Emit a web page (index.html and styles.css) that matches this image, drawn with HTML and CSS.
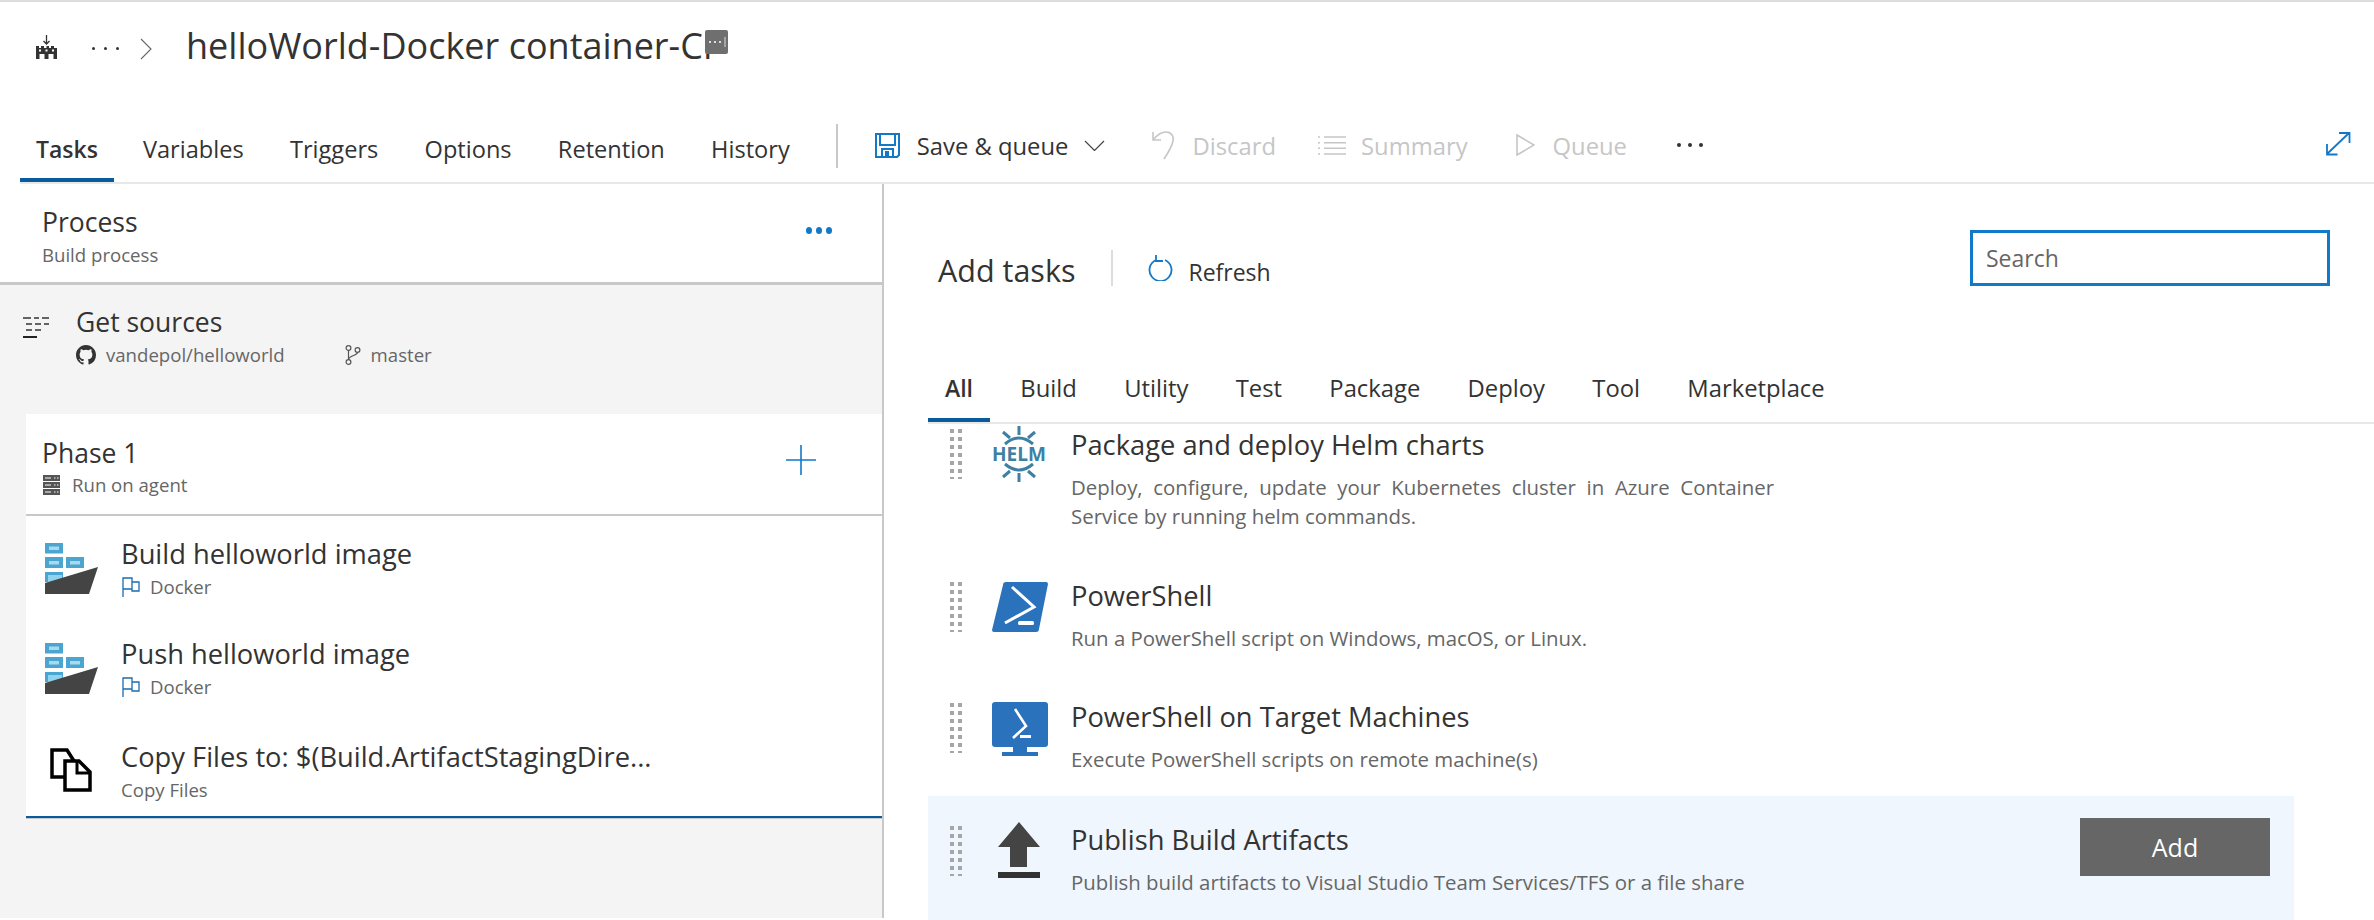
FILE: index.html
```html
<!DOCTYPE html>
<html lang="en">
  <head>
    <meta charset="UTF-8" />
    <title>helloWorld-Docker container-CI</title>
    <link rel="stylesheet" href="styles.css">
  </head>
  <body>
    <header id="main-header">
      <div class="title-row">
        <svg class="factory-icon" viewBox="0 0 21 24" width="21" height="24">
          <path d="M10.500 0v9M7.500 6l3 3 3-3" fill="none" stroke="#333" stroke-width="1.300"/>
          <path d="M0 11h3v2h2v-2h3v2h2.500v-2h2.500v2h2v-2h3v2h3v11H0z" fill="#333"/>
          <rect x="3" y="14.500" width="2" height="2" fill="#fff"/>
          <rect x="9.500" y="14.500" width="2" height="2" fill="#fff"/>
          <rect x="16" y="14.500" width="2" height="2" fill="#fff"/>
          <rect x="3.500" y="19" width="5" height="5" fill="#fff"/>
          <rect x="12.500" y="19" width="5" height="5" fill="#fff"/>
        </svg>
        <span class="crumb-dots"><i></i><i></i><i></i></span>
        <svg class="crumb-chevron" viewBox="0 0 12 22" width="12" height="22">
          <path d="M1 1l10 10L1 21" fill="none" stroke="#666" stroke-width="1.100"/>
        </svg>
        <h1 class="title">helloWorld-Docker container-CI</h1>
        <svg class="title-badge" viewBox="0 0 23 24" width="23" height="24">
          <rect width="23" height="24" rx="2" fill="#6f6f6f"/>
          <path d="M4 12h2M9 12h2M14 12h2" stroke="#ddd" stroke-width="2"/>
          <path d="M20 7v10" stroke="#ddd" stroke-width="1"/>
        </svg>
      </div>

      <div class="toolbar">
        <nav class="main-tabs">
          <a class="tab active">Tasks</a>
          <a class="tab">Variables</a>
          <a class="tab">Triggers</a>
          <a class="tab">Options</a>
          <a class="tab">Retention</a>
          <a class="tab">History</a>
        </nav>
        <span class="toolbar-sep"></span>
        <div class="actions">
          <button class="action save">
            <svg viewBox="0 0 25 25" width="25" height="25">
              <path d="M1 1h23v21l-2 2H1z" fill="none" stroke="#1278c8" stroke-width="2"/>
              <path d="M5 1v11h15V1M7 24v-8h11v8" fill="none" stroke="#1278c8" stroke-width="2"/>
              <rect x="10" y="18" width="4" height="6" fill="#1278c8"/>
            </svg>
            <span>Save &amp; queue</span>
            <svg class="save-chevron" viewBox="0 0 21 11" width="21" height="11">
              <path d="M1 1l9.500 9.500L20 1" fill="none" stroke="#444" stroke-width="1.200"/>
            </svg>
          </button>
          <button class="action discard" disabled>
            <svg viewBox="0 0 23 30" width="23" height="30">
              <path d="M1 2v8h8M1 10c4-5 8-8 13-8 6 0 8 5 7 9-1 5-5 12-9 18" fill="none" stroke="#c6c6c6" stroke-width="1.600"/>
            </svg>
            <span>Discard</span>
          </button>
          <button class="action summary" disabled>
            <svg viewBox="0 0 28 19" width="28" height="19">
              <path d="M6 1h22M6 6.700h22M6 12.300h22M6 18h22" stroke="#c6c6c6" stroke-width="1.600"/>
              <path d="M0 1h2M0 6.700h2M0 12.300h2M0 18h2" stroke="#c6c6c6" stroke-width="1.600"/>
            </svg>
            <span>Summary</span>
          </button>
          <button class="action queue" disabled>
            <svg viewBox="0 0 19 22" width="19" height="22">
              <path d="M1 1l17 10L1 21z" fill="none" stroke="#c6c6c6" stroke-width="1.600"/>
            </svg>
            <span>Queue</span>
          </button>
          <span class="more-dots"><i></i><i></i><i></i></span>
        </div>
        <svg class="expand-icon" viewBox="0 0 26 25" width="26" height="25">
          <path d="M2 23L24 2M14 2h10.500v10M2 13v10.500h10.500" fill="none" stroke="#1278c8" stroke-width="1.800"/>
        </svg>
      </div>
    </header>

    <main class="editor">
      <aside class="left-pane">
        <div class="process">
          <div>
            <p class="head">Process</p>
            <p class="sub">Build process</p>
          </div>
          <span class="process-dots"><i></i><i></i><i></i></span>
        </div>

        <div class="sources">
          <svg class="sources-icon" viewBox="0 0 26 21" width="26" height="21">
            <path d="M0 1h8M11 1h5M19 1h7M3 7h6M12 7h6M21 7h5M3 13h6M12 13h6" stroke="#333" stroke-width="1.500"/>
            <path d="M0 20h14" stroke="#222" stroke-width="2"/>
          </svg>
          <div>
            <p class="head">Get sources</p>
            <div class="sources-meta">
              <svg viewBox="0 0 16 16" width="20" height="20">
                <path fill="#333" d="M8 0C3.580 0 0 3.580 0 8c0 3.540 2.290 6.530 5.470 7.590.4.070.55-.17.55-.38v-1.340c-2.230.48-2.700-1.070-2.700-1.070-.36-.92-.89-1.170-.89-1.170-.73-.5.050-.49.050-.49.800.06 1.230.83 1.230.83.710 1.220 1.870.87 2.320.66.070-.52.280-.87.510-1.070-1.780-.2-3.640-.89-3.640-3.950 0-.87.310-1.590.820-2.150-.08-.2-.36-1.020.08-2.120 0 0 .67-.21 2.200.82a7.600 7.600 0 014 0c1.530-1.040 2.200-.82 2.200-.82.440 1.100.16 1.920.08 2.120.51.560.82 1.270.82 2.150 0 3.070-1.870 3.750-3.650 3.950.29.250.54.730.54 1.480v2.200c0 .21.150.46.550.38A8.010 8.010 0 0016 8c0-4.420-3.580-8-8-8z"/>
              </svg>
              <span class="repo">vandepol/helloworld</span>
              <svg class="branch" viewBox="0 0 16 20" width="16" height="20">
                <g fill="none" stroke="#555" stroke-width="1.200">
                  <circle cx="3.500" cy="3" r="2.400"/>
                  <circle cx="3.500" cy="17" r="2.400"/>
                  <circle cx="12.500" cy="5" r="2.400"/>
                  <path d="M3.500 5.500v9M12.500 7.500c0 3-9 3-9 7"/>
                </g>
              </svg>
              <span>master</span>
            </div>
          </div>
        </div>

        <section class="phase">
          <div class="phase-head">
            <div>
              <p class="head">Phase 1</p>
              <div class="phase-agent">
                <svg viewBox="0 0 17 20" width="17" height="20">
                  <path d="M0 0h17v6H0zM0 7h17v6H0zM0 14h17v6H0z" fill="#555"/>
                  <path d="M2 3h6M11 3h1.500M14 3h1.500M2 10h6M11 10h1.500M14 10h1.500M2 17h6M11 17h1.500M14 17h1.500" stroke="#fff" stroke-width="1.200"/>
                </svg>
                <span class="sub">Run on agent</span>
              </div>
            </div>
            <svg class="plus" viewBox="0 0 30 30" width="30" height="30">
              <path d="M15 0v30M0 15h30" stroke="#1278c8" stroke-width="1.600"/>
            </svg>
          </div>

          <div class="task">
            <svg class="docker" viewBox="0 0 56 56" width="56" height="56">
              <rect x="3" y="4" width="18" height="10.500" fill="#4aa5d0"/>
              <rect x="7" y="7.500" width="10" height="3.500" fill="#a9d9ec"/>
              <rect x="3" y="18" width="18" height="11" fill="#4aa5d0"/>
              <rect x="7" y="22" width="10" height="3.500" fill="#a9d9ec"/>
              <rect x="24" y="18" width="18" height="11" fill="#4aa5d0"/>
              <rect x="28" y="22" width="10" height="3.500" fill="#a9d9ec"/>
              <rect x="3" y="33" width="18" height="10" fill="#4aa5d0"/>
              <rect x="6" y="36" width="14" height="7" fill="#8fd4ee"/>
              <path d="M3 44L56 28 47 55H3z" fill="#444"/>
            </svg>
            <div>
              <p class="task-name">Build helloworld image</p>
              <div class="task-sub">
                <svg viewBox="0 0 18 20" width="18" height="20">
                  <path d="M1 20V1h9v11H1M10 5h7v9h-7V5" fill="none" stroke="#1a6cb0" stroke-width="1.300"/>
                </svg>
                <span class="sub">Docker</span>
              </div>
            </div>
          </div>

          <div class="task">
            <svg class="docker" viewBox="0 0 56 56" width="56" height="56">
              <rect x="3" y="4" width="18" height="10.500" fill="#4aa5d0"/>
              <rect x="7" y="7.500" width="10" height="3.500" fill="#a9d9ec"/>
              <rect x="3" y="18" width="18" height="11" fill="#4aa5d0"/>
              <rect x="7" y="22" width="10" height="3.500" fill="#a9d9ec"/>
              <rect x="24" y="18" width="18" height="11" fill="#4aa5d0"/>
              <rect x="28" y="22" width="10" height="3.500" fill="#a9d9ec"/>
              <rect x="3" y="33" width="18" height="10" fill="#4aa5d0"/>
              <rect x="6" y="36" width="14" height="7" fill="#8fd4ee"/>
              <path d="M3 44L56 28 47 55H3z" fill="#444"/>
            </svg>
            <div>
              <p class="task-name">Push helloworld image</p>
              <div class="task-sub">
                <svg viewBox="0 0 18 20" width="18" height="20">
                  <path d="M1 20V1h9v11H1M10 5h7v9h-7V5" fill="none" stroke="#1a6cb0" stroke-width="1.300"/>
                </svg>
                <span class="sub">Docker</span>
              </div>
            </div>
          </div>

          <div class="task task-copy">
            <svg class="copy-icon" viewBox="0 0 42 44" width="42" height="44">
              <path d="M20 29H2V2h15l7 11" fill="none" stroke="#000" stroke-width="3.500"/>
              <path d="M15 13h14l11 11v18H15z" fill="#fff" stroke="#000" stroke-width="3.500"/>
              <path d="M27 13v12h13" fill="none" stroke="#000" stroke-width="3"/>
            </svg>
            <div>
              <p class="task-name">Copy Files to: $(Build.ArtifactStagingDire...</p>
              <p class="sub task-plain">Copy Files</p>
            </div>
          </div>
        </section>
      </aside>

      <section class="right-pane">
        <div class="add-head">
          <h2 class="add-title">Add tasks</h2>
          <span class="add-sep"></span>
          <svg class="refresh-icon" viewBox="0 0 25 26" width="25" height="26">
            <path d="M8 5a11 11 0 1 0 9 0M8 0v6h7" fill="none" stroke="#1278c8" stroke-width="1.800"/>
          </svg>
          <span class="refresh">Refresh</span>
          <div class="search">Search</div>
        </div>

        <nav class="filter-tabs">
          <a class="filter active">All</a>
          <a class="filter">Build</a>
          <a class="filter">Utility</a>
          <a class="filter">Test</a>
          <a class="filter">Package</a>
          <a class="filter">Deploy</a>
          <a class="filter">Tool</a>
          <a class="filter">Marketplace</a>
        </nav>

        <div class="catalog">
          <ul class="catalog-list">
            <li class="item item-tall">
              <span class="grip"></span>
              <svg class="item-icon icon-helm" viewBox="0 0 56 56" width="56" height="56">
                <g fill="none" stroke="#3d80a3" stroke-width="3">
                  <path d="M13 18Q27 6 41 18M13 38Q27 50 41 38"/>
                  <path d="M27 0v9M11 6l7 6M43 6l-7 6M27 56v-9M11 51l7-6M43 51l-7-6"/>
                </g>
                <text class="helm-text" x="27" y="35" text-anchor="middle" textLength="54" lengthAdjust="spacingAndGlyphs">HELM</text>
              </svg>
              <div class="item-body">
                <p class="item-name">Package and deploy Helm charts</p>
                <p class="item-desc">Deploy, configure, update your Kubernetes cluster in Azure Container Service by running helm commands.</p>
              </div>
            </li>
            <li class="item">
              <span class="grip"></span>
              <svg class="item-icon" viewBox="0 0 56 50" width="56" height="50">
                <path d="M11 3a3 3 0 0 1 3-3h40a2 2 0 0 1 2 2l-9 45a3 3 0 0 1-3 3H2a2 2 0 0 1-2-2z" fill="#2b72bd"/>
                <path d="M20 5l22 20-29 16" fill="none" stroke="#fff" stroke-width="3"/>
                <rect x="26" y="39" width="16" height="4" rx="1.500" fill="#fff"/>
              </svg>
              <div class="item-body">
                <p class="item-name">PowerShell</p>
                <p class="item-desc">Run a PowerShell script on Windows, macOS, or Linux.</p>
              </div>
            </li>
            <li class="item">
              <span class="grip"></span>
              <svg class="item-icon icon-monitor" viewBox="0 0 56 54" width="56" height="54">
                <path d="M3 0h50a3 3 0 0 1 3 3v39a3 3 0 0 1-3 3H3a3 3 0 0 1-3-3V3a3 3 0 0 1 3-3z" fill="#2b72bd"/>
                <path d="M21 45h14v5H21zM10 50h36v4H10z" fill="#2b72bd"/>
                <path d="M23 7l11 17-13 12" fill="none" stroke="#fff" stroke-width="2.600"/>
                <rect x="28" y="33" width="11" height="3" fill="#fff"/>
              </svg>
              <div class="item-body">
                <p class="item-name">PowerShell on Target Machines</p>
                <p class="item-desc">Execute PowerShell scripts on remote machine(s)</p>
              </div>
            </li>
            <li class="item selected">
              <span class="grip"></span>
              <svg class="item-icon icon-publish" viewBox="0 0 42 56" width="42" height="56">
                <path d="M21 0l21 25H29v20H12V25H0z" fill="#444"/>
                <rect y="50" width="42" height="6" fill="#333"/>
              </svg>
              <div class="item-body">
                <p class="item-name">Publish Build Artifacts</p>
                <p class="item-desc">Publish build artifacts to Visual Studio Team Services/TFS or a file share</p>
              </div>
              <button class="add-button">Add</button>
            </li>
          </ul>
        </div>
      </section>
    </main>
  </body>
</html>
```

FILE: styles.css
```css
* {
  margin: 0;
  padding: 0;
  box-sizing: border-box;
}

html,
body {
  height: 920px;
  overflow: hidden;
}

body {
  font-family: "Open Sans", sans-serif;
  font-size: 23px;
  color: #333;
  background-color: white;
}

svg {
  display: block;
  flex: none;
}

/* header */
#main-header {
  border-top: 2px solid #ddd;
  height: 184px;
}

.title-row {
  height: 118px;
  display: flex;
  align-items: flex-start;
  padding: 33px 0 0 36px;
  position: relative;
}

.crumb-dots {
  margin: 12px 0 0 35px;
  width: 27px;
  display: flex;
  justify-content: space-between;
}

.crumb-dots i {
  width: 3px;
  height: 3px;
  border-radius: 50%;
  background-color: #333;
}

.crumb-chevron {
  margin: 3px 0 0 21px;
}

.title {
  margin: -12px 0 0 34px;
  font-size: 36px;
  font-weight: 400;
  line-height: 46px;
}

.title-badge {
  position: absolute;
  left: 705px;
  top: 28px;
}

.toolbar {
  height: 64px;
  margin-left: 20px;
  border-bottom: 2px solid #e8e8e8;
  display: flex;
  align-items: flex-start;
}

.main-tabs {
  display: flex;
  height: 62px;
  align-items: flex-end;
}

.tab {
  padding: 0 16px;
  margin-right: 14.25px;
  height: 44px;
  font-size: 23.6px;
  line-height: 22px;
  border-bottom: 4px solid transparent;
}

.tab:last-child {
  margin-right: 0;
}

.tab.active {
  font-size: 23px;
  font-weight: 600;
  margin-right: 13px;
  border-bottom-color: #0a5a9e;
}

.toolbar-sep {
  width: 2px;
  height: 44px;
  margin: 4px 37px 0 30px;
  background-color: #c8c8c8;
}

.actions {
  display: flex;
  align-items: center;
  height: 50px;
  font-size: 23.8px;
}

.action {
  display: flex;
  align-items: center;
  gap: 17px;
  border: 0;
  background: none;
  font: inherit;
  color: #333;
}

.action span {
  position: relative;
  top: 1px;
}

.action:disabled {
  color: #c6c6c6;
}

.save-chevron {
  margin-left: -1px;
}

.discard {
  margin-left: 47px;
}

.summary {
  margin-left: 42px;
  gap: 15px;
}

.queue {
  margin-left: 48px;
  gap: 18px;
}

.more-dots {
  margin-left: 50px;
  display: flex;
  gap: 7px;
}

.more-dots i {
  width: 4px;
  height: 4px;
  border-radius: 50%;
  background-color: #333;
}

.expand-icon {
  margin: 11px 23px 0 auto;
}

/* left pane */
.editor {
  display: flex;
  height: 734px;
}

.left-pane {
  width: 884px;
  flex: none;
  border-right: 2px solid #c8c8c8;
  background-color: #f4f4f4;
}

.head {
  font-size: 26.5px;
  line-height: 34px;
}

.sub {
  font-size: 18.6px;
  line-height: 26px;
  color: #666;
}

.process {
  height: 101px;
  padding: 21px 0 0 42px;
  background-color: white;
  border-bottom: 3px solid #c8c8c8;
  display: flex;
  justify-content: space-between;
}

.process .sub {
  margin-top: 3px;
}

.process-dots {
  display: flex;
  gap: 4px;
  height: 7px;
  margin: 22px 50px 0 0;
}

.process-dots i {
  width: 6px;
  height: 7px;
  border-radius: 50%;
  background-color: #1278c8;
}

.sources {
  height: 129px;
  display: flex;
  padding: 20px 0 0 23px;
  gap: 27px;
}

.sources-icon {
  margin-top: 12px;
}

.sources-meta {
  display: flex;
  align-items: center;
  gap: 10px;
  font-size: 18.6px;
  color: #666;
  margin-top: 3px;
}

.branch {
  margin-left: 50px;
}

.phase {
  margin-left: 26px;
  height: 404px;
  background-color: white;
  border-bottom: 2px solid #0a5a9e;
  box-shadow: 0 1px #c8c8c8;
}

.phase-head {
  height: 102px;
  padding: 22px 0 0 16px;
  border-bottom: 2px solid #c8c8c8;
  display: flex;
  justify-content: space-between;
}

.phase-agent {
  display: flex;
  align-items: center;
  gap: 12px;
  padding: 2px 0 0 1px;
}

.plus {
  margin: 9px 66px 0 0;
}

.task {
  height: 100px;
  display: flex;
  gap: 23px;
  padding: 23px 0 0 16px;
}

.task-name {
  font-size: 27.3px;
  line-height: 34px;
  margin-top: -2px;
}

.task-sub {
  display: flex;
  align-items: center;
  gap: 10px;
  height: 28px;
  margin-top: 2px;
  padding-left: 1px;
}

.task-copy {
  height: 98px;
  margin-top: 2px;
  gap: 29px;
  padding-left: 24px;
}

.task-copy .task-name {
  margin-top: -1px;
}

.task-copy .copy-icon {
  margin-top: 7px;
}

.task-plain {
  line-height: 28px;
  margin-top: 2px;
}

/* right pane */
.right-pane {
  flex: 1;
  min-width: 0;
}

.add-head {
  height: 102px;
  padding: 0 44px 0 54px;
  display: flex;
  align-items: flex-start;
}

.add-title {
  margin-top: 66px;
  font-size: 30.5px;
  font-weight: 400;
  line-height: 40px;
}

.add-sep {
  width: 2px;
  height: 36px;
  margin: 66px 0 0 36px;
  background-color: #ddd;
}

.refresh-icon {
  margin: 71px 0 0 35px;
}

.refresh {
  margin: 72px 0 0 15px;
  line-height: 32px;
}

.search {
  margin: 46px 0 0 auto;
  width: 360px;
  height: 56px;
  border: 3px solid #1278c8;
  padding-left: 13px;
  line-height: 51px;
  color: #666;
}

.filter-tabs {
  margin: 0 0 0 44px;
  height: 138px;
  border-bottom: 2px solid #e8e8e8;
  display: flex;
  align-items: flex-end;
}

.filter {
  padding: 0 17px;
  margin-right: 13.3px;
  height: 52px;
  font-size: 23.8px;
  line-height: 36px;
  border-bottom: 4px solid transparent;
}

.filter.active {
  font-size: 23px;
  font-weight: 600;
  border-bottom-color: #0a5a9e;
}

.catalog {
  height: 496px;
  overflow: hidden;
  margin-left: 44px;
  width: 1366px;
}

.catalog-list {
  list-style: none;
  margin-top: -23px;
}

.item {
  height: 121px;
  display: flex;
  align-items: flex-start;
  padding: 28px 0 0 22px;
  position: relative;
}

.item-tall {
  height: 151px;
}

.selected {
  height: 124px;
  margin-top: 2px;
  background-color: #eff6fd;
}

.grip {
  width: 12px;
  height: 50px;
  margin-top: 2px;
  background-image: repeating-linear-gradient(to bottom, #a6a6a6 0 4px, transparent 4px 8px);
  -webkit-mask: linear-gradient(to right, black 0 4px, transparent 4px 8px, black 8px 12px);
  mask: linear-gradient(to right, black 0 4px, transparent 4px 8px, black 8px 12px);
}

.item-tall .grip {
  margin-top: 0;
}

.item-icon {
  margin: 2px 23px 0 30px;
}

.icon-helm {
  margin-top: -3px;
}

.icon-monitor {
  margin-top: 1px;
}

.icon-publish {
  margin: -2px 31px 0 36px;
}

.helm-text {
  font-family: "Open Sans", sans-serif;
  font-size: 19.6px;
  font-weight: 700;
  fill: #3d80a3;
}

.item-body {
  width: 703px;
  margin-top: -1px;
}

.item-name {
  font-size: 27.3px;
  line-height: 34px;
}

.item-desc {
  margin-top: 11px;
  font-size: 20.4px;
  line-height: 29px;
  color: #666;
  text-align: justify;
}

.add-button {
  position: absolute;
  right: 24px;
  top: 22px;
  width: 190px;
  height: 58px;
  border: 0;
  background-color: #666;
  color: white;
  font: inherit;
  font-size: 25px;
}
```
